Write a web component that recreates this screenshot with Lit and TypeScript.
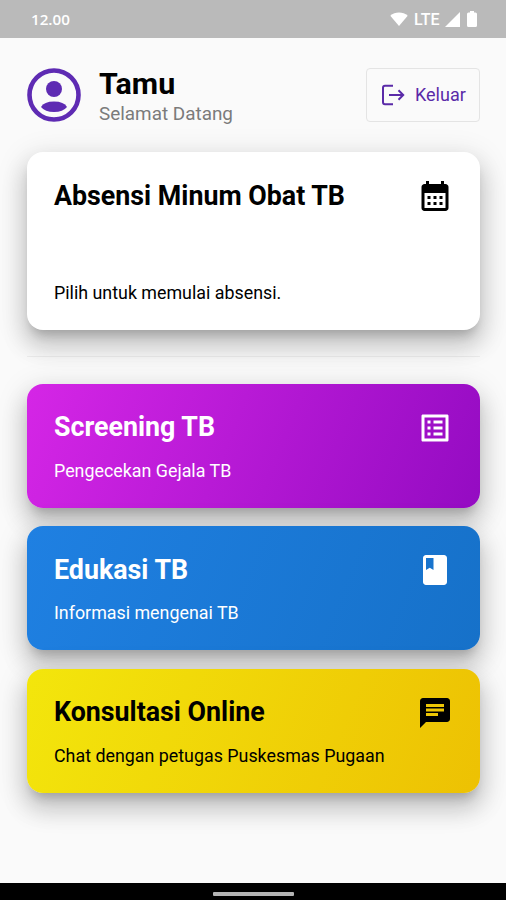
import { LitElement, html, css, svg } from "lit";
import { customElement, property } from "lit/decorators.js";

const icons = {
  calendar: svg`<path d="M19 4h-1V2h-2v2H8V2H6v2H5c-1.11 0-1.99.9-1.99 2L3 20c0 1.1.89 2 2 2h14c1.1 0 2-.9 2-2V6c0-1.1-.9-2-2-2zm0 16H5V10h14v10zM9 14H7v-2h2v2zm4 0h-2v-2h2v2zm4 0h-2v-2h2v2zm-8 4H7v-2h2v2zm4 0h-2v-2h2v2zm4 0h-2v-2h2v2z"/>`,
  list: svg`<path d="M19 5v14H5V5h14m1.1-2H3.9c-.5 0-.9.4-.9.9v16.2c0 .4.4.9.9.9h16.2c.4 0 .9-.5.9-.9V3.9c0-.5-.5-.9-.9-.9zM11 7h6v2h-6V7zm0 4h6v2h-6v-2zm0 4h6v2h-6zM7 7h2v2H7zm0 4h2v2H7zm0 4h2v2H7z"/>`,
  book: svg`<path d="M18 2H6c-1.1 0-2 .9-2 2v16c0 1.1.9 2 2 2h12c1.1 0 2-.9 2-2V4c0-1.1-.9-2-2-2zM6 4h5v8l-2.5-1.5L6 12V4z"/>`,
  chat: svg`<path d="M20 2H4c-1.1 0-1.99.9-1.99 2L2 22l4-4h14c1.1 0 2-.9 2-2V4c0-1.1-.9-2-2-2zM6 9h12v2H6V9zm8 5H6v-2h8v2zm4-6H6V6h12v2z"/>`,
};

@customElement("menu-card")
class MenuCard extends LitElement {
  @property() heading = "";
  @property() note = "";
  @property() icon: keyof typeof icons = "calendar";

  static styles = css`
    :host {
      display: flex;
      flex-direction: column;
      justify-content: space-between;
      box-sizing: border-box;
      padding: 26px 26.6px 21px 27px;
      border-radius: 16px;
      box-shadow: 0 9px 11px -5px rgba(0, 0, 0, 0.2), 0 16px 23px 3px rgba(0, 0, 0, 0.14),
        0 7px 29px 5px rgba(0, 0, 0, 0.1);
    }
    .top {
      display: flex;
      justify-content: space-between;
      height: 36px;
    }
    .heading {
      margin-top: 1.7px;
      font-size: 26.8px;
      line-height: 32px;
      font-weight: 700;
      white-space: nowrap;
    }
    .icon {
      width: 36px;
      height: 36px;
      fill: currentColor;
    }
    .note {
      font-size: 17.85px;
      line-height: 32px;
      white-space: nowrap;
    }
  `;

  render() {
    return html`
      <div class="top">
        <div class="heading">${this.heading}</div>
        <svg class="icon" viewBox="0 0 24 24">${icons[this.icon]}</svg>
      </div>
      <div class="note">${this.note}</div>
    `;
  }
}

@customElement("app-root")
class AppRoot extends LitElement {
  static styles = css`
    :host {
      display: flex;
      flex-direction: column;
      height: 900px;
      background: #fafafa;
      color: #000;
      font-family: Roboto, sans-serif;
      overflow: hidden;
    }
    .status {
      display: flex;
      align-items: center;
      justify-content: space-between;
      box-sizing: border-box;
      flex: none;
      height: 37.5px;
      padding: 1px 29px 0 31px;
      background: #bababa;
      color: #fff;
    }
    .clock {
      font: 600 15.2px/20px "Open Sans", sans-serif;
    }
    .signals {
      display: flex;
      align-items: center;
      font-size: 16px;
    }
    .signals svg {
      fill: #fff;
    }
    .lte {
      margin: 0 5.5px 0 6px;
      font-weight: 500;
    }
    .battery {
      margin-left: 7px;
    }
    .page {
      flex: 1;
      padding: 30px 26px 0 27px;
    }
    .header {
      display: flex;
      align-items: center;
      height: 54px;
      margin-bottom: 30.5px;
    }
    .avatar {
      width: 54px;
      height: 54px;
      margin-right: 18px;
      color: #5e2bb3;
    }
    .who {
      flex: 1;
      padding-top: 4px;
    }
    .name {
      font-size: 30.4px;
      line-height: 34px;
      font-weight: 700;
    }
    .greeting {
      font-size: 18.9px;
      line-height: 26px;
      color: #7b7b7b;
    }
    .logout {
      display: flex;
      align-items: center;
      box-sizing: border-box;
      width: 114px;
      height: 54px;
      padding: 0 0 0 14px;
      gap: 10px;
      border: 1px solid #e4e4e4;
      border-radius: 4px;
      background: transparent;
      color: #5a2aa8;
      font: 400 18px Roboto, sans-serif;
    }
    .attendance {
      height: 177.5px;
      background: #fff;
    }
    .rule {
      height: 1px;
      margin: 26.5px 0;
      background: rgba(0, 0, 0, 0.05);
      position: relative;
    }
    .menu {
      display: flex;
      flex-direction: column;
      gap: 18.5px;
    }
    .menu menu-card {
      height: 124px;
    }
    .screening {
      color: #fff;
      background: linear-gradient(112deg, #d526e6, #940bc2);
    }
    .education {
      color: #fff;
      background: linear-gradient(112deg, #1f80e2, #1671c9);
    }
    .consult {
      background: linear-gradient(112deg, #f3e60c, #edc103);
    }
    .nav {
      display: flex;
      flex: none;
      justify-content: center;
      height: 17.5px;
      background: #000;
    }
    .handle {
      width: 81px;
      height: 4px;
      margin-top: 9px;
      border-radius: 1px;
      background: #b4b4b4;
    }
  `;

  render() {
    return html`
      <div class="status">
        <span class="clock">12.00</span>
        <div class="signals">
          <svg width="18" height="14" viewBox="0 0 18 14"><path d="M.3 3.7C5 -.6 13 -.6 17.700 3.700L9 14z"/></svg>
          <span class="lte">LTE</span>
          <svg width="15" height="15" viewBox="0 0 15 15"><path d="M15 0v15H0z"/></svg>
          <svg class="battery" width="10" height="16" viewBox="0 0 10 16"><path d="M3 0h4v1.500h1.500q1.500 0 1.500 1.500v11.500q0 1.500-1.500 1.500h-7q-1.500 0-1.500-1.500V3q0-1.500 1.500-1.500H3z"/></svg>
        </div>
      </div>
      <main class="page">
        <header class="header">
          <svg class="avatar" viewBox="0 0 54 54">
            <circle cx="27" cy="27" r="24.500" fill="none" stroke="currentColor" stroke-width="4.600"/>
            <circle cx="27" cy="21" r="8" fill="currentColor"/>
            <path d="M14 39Q17 33.500 27 33.500T40 39Q36 44 27 44T14 39z" fill="currentColor"/>
          </svg>
          <div class="who">
            <div class="name">Tamu</div>
            <div class="greeting">Selamat Datang</div>
          </div>
          <button class="logout">
            <svg width="24" height="22" viewBox="0 0 24 22" fill="none" stroke="currentColor" stroke-width="2">
              <path d="M12 1.800H4Q2 1.800 2 3.800v14.400q0 2 2 2h8M8 11h14M17.500 6.300l4.700 4.700-4.700 4.700"/>
            </svg>
            Keluar
          </button>
        </header>
        <menu-card class="attendance" heading="Absensi Minum Obat TB" note="Pilih untuk memulai absensi." icon="calendar"></menu-card>
        <div class="rule"></div>
        <div class="menu">
          <menu-card class="screening" heading="Screening TB" note="Pengecekan Gejala TB" icon="list"></menu-card>
          <menu-card class="education" heading="Edukasi TB" note="Informasi mengenai TB" icon="book"></menu-card>
          <menu-card class="consult" heading="Konsultasi Online" note="Chat dengan petugas Puskesmas Pugaan" icon="chat"></menu-card>
        </div>
      </main>
      <div class="nav"><div class="handle"></div></div>
    `;
  }
}
